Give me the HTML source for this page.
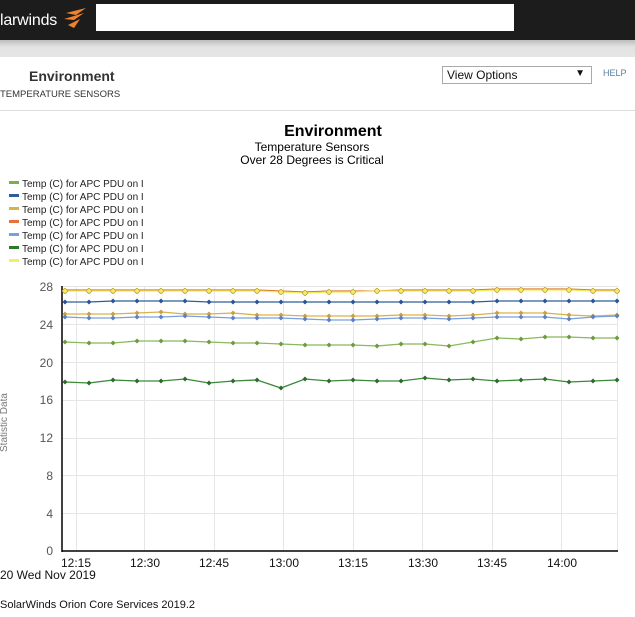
<!DOCTYPE html>
<html><head><meta charset="utf-8"><style>
body{margin:0;width:635px;height:617px;background:#fff;font-family:"Liberation Sans",sans-serif;position:relative;overflow:hidden}
.top{position:absolute;left:0;top:0;width:635px;height:40px;background:#1c1c1c}
.logo{position:absolute;left:0;top:12px;color:#fff;font-size:16px;letter-spacing:-0.2px}
.search{position:absolute;left:96px;top:4px;width:418px;height:27px;background:#fff}
.bar{position:absolute;left:0;top:40px;width:635px;height:17px;background:linear-gradient(#bdbdbd,#e2e2e2 40%,#e6e6e6)}
.t1{position:absolute;left:29px;top:68px;font-size:14px;font-weight:bold;color:#333}
.t2{position:absolute;left:0;top:89px;font-size:9.5px;color:#333}
.sel{position:absolute;left:442px;top:66px;width:150px;height:18px;border:1px solid #aaa;font-size:12px;box-sizing:border-box;padding:1px 4px;color:#111}
.sel span{position:absolute;right:6px;top:1px;font-size:10px}
.help{position:absolute;left:603px;top:68px;font-size:9px;color:#5a7fa0}
.hr{position:absolute;left:0;top:110px;width:635px;height:1px;background:#ddd}
.abs{position:absolute}
</style></head><body>
<div class="top"></div>
<div class="logo">larwinds</div>
<svg class="abs" style="left:60px;top:7px" width="28" height="24" viewBox="0 0 28 24"><path d="M6 6 L26 1 L16 8 Z M4 12 L24 6 L14 13 Z M8 18 L20 12 L14 21 Z" fill="#f0822d"/></svg>
<div class="search"></div>
<div class="bar"></div>
<div class="t1">Environment</div>
<div class="t2">TEMPERATURE SENSORS</div>
<div class="sel">View Options<span>▼</span></div>
<div class="help">HELP</div>
<div class="hr"></div>
<div class="abs" style="left:0;top:123px;width:666px;text-align:center;font-size:16px;font-weight:bold;color:#000">Environment</div>
<div class="abs" style="left:0;top:141px;width:624px;text-align:center;font-size:12px;line-height:13px;color:#000">Temperature Sensors<br>Over 28 Degrees is Critical</div>
<svg class="abs" style="left:0;top:0" width="635" height="617" font-family="Liberation Sans" >
<g font-size="10" fill="#222">
<rect x="9" y="181" width="10" height="3" fill="#7cae4b"/><text x="22" y="187">Temp (C) for APC PDU on I</text>
<rect x="9" y="194" width="10" height="3" fill="#2f5f9a"/><text x="22" y="200">Temp (C) for APC PDU on I</text>
<rect x="9" y="207" width="10" height="3" fill="#d9b24a"/><text x="22" y="213">Temp (C) for APC PDU on I</text>
<rect x="9" y="220" width="10" height="3" fill="#e8703a"/><text x="22" y="226">Temp (C) for APC PDU on I</text>
<rect x="9" y="233" width="10" height="3" fill="#7a9fe0"/><text x="22" y="239">Temp (C) for APC PDU on I</text>
<rect x="9" y="246" width="10" height="3" fill="#2d7a2d"/><text x="22" y="252">Temp (C) for APC PDU on I</text>
<rect x="9" y="259" width="10" height="3" fill="#f5f05a"/><text x="22" y="265">Temp (C) for APC PDU on I</text>
</g>
<g stroke="#e6e6e6" stroke-width="1">
<line x1="62" y1="286.5" x2="617" y2="286.5"/><line x1="62" y1="324.5" x2="617" y2="324.5"/><line x1="62" y1="362.5" x2="617" y2="362.5"/><line x1="62" y1="400.5" x2="617" y2="400.5"/><line x1="62" y1="438.5" x2="617" y2="438.5"/><line x1="62" y1="475.5" x2="617" y2="475.5"/><line x1="62" y1="513.5" x2="617" y2="513.5"/>
<line x1="76.5" y1="286" x2="76.5" y2="551"/><line x1="144.5" y1="286" x2="144.5" y2="551"/><line x1="214.5" y1="286" x2="214.5" y2="551"/><line x1="283.5" y1="286" x2="283.5" y2="551"/><line x1="353.5" y1="286" x2="353.5" y2="551"/><line x1="422.5" y1="286" x2="422.5" y2="551"/><line x1="492.5" y1="286" x2="492.5" y2="551"/><line x1="561.5" y1="286" x2="561.5" y2="551"/><line x1="617.5" y1="286" x2="617.5" y2="551"/>
</g>
<g stroke="#000" stroke-width="1.5"><line x1="62" y1="286" x2="62" y2="552"/><line x1="62" y1="551" x2="618" y2="551"/></g>
<g font-size="12" fill="#555" text-anchor="end">
<text x="53" y="291">28</text><text x="53" y="329">24</text><text x="53" y="367">20</text><text x="53" y="404">16</text><text x="53" y="442">12</text><text x="53" y="480">8</text><text x="53" y="518">4</text><text x="53" y="555">0</text></g>
<text transform="translate(7,452) rotate(-90)" font-size="10" fill="#777">Statistic Data</text>
<g font-size="12" fill="#111" text-anchor="middle">
<text x="76" y="567">12:15</text><text x="145" y="567">12:30</text><text x="214" y="567">12:45</text><text x="284" y="567">13:00</text><text x="353" y="567">13:15</text><text x="423" y="567">13:30</text><text x="492" y="567">13:45</text><text x="562" y="567">14:00</text></g>
<text x="0" y="579" font-size="12" fill="#111">20 Wed Nov 2019</text>
<text x="0" y="608" font-size="11" fill="#111">SolarWinds Orion Core Services 2019.2</text>
<defs>
<marker id="m1" viewBox="0 0 6 6" refX="3" refY="3" markerWidth="5" markerHeight="5" markerUnits="userSpaceOnUse"><path d="M3 0L6 3L3 6L0 3Z" fill="#2d6a2d"/></marker>
<marker id="m2" viewBox="0 0 6 6" refX="3" refY="3" markerWidth="5" markerHeight="5" markerUnits="userSpaceOnUse"><path d="M3 0L6 3L3 6L0 3Z" fill="#6e9a3e"/></marker>
<marker id="m3" viewBox="0 0 6 6" refX="3" refY="3" markerWidth="5" markerHeight="5" markerUnits="userSpaceOnUse"><path d="M3 0L6 3L3 6L0 3Z" fill="#5b7fc8"/></marker>
<marker id="m4" viewBox="0 0 6 6" refX="3" refY="3" markerWidth="5" markerHeight="5" markerUnits="userSpaceOnUse"><path d="M3 0L6 3L3 6L0 3Z" fill="#c8a040"/></marker>
<marker id="m5" viewBox="0 0 6 6" refX="3" refY="3" markerWidth="5" markerHeight="5" markerUnits="userSpaceOnUse"><path d="M3 0L6 3L3 6L0 3Z" fill="#2a5590"/></marker>
<marker id="m6" viewBox="0 0 6 6" refX="3" refY="3" markerWidth="6" markerHeight="6" markerUnits="userSpaceOnUse"><path d="M3 0L6 3L3 6L0 3Z" fill="#f3ec6a" stroke="#c9a030" stroke-width="0.8"/></marker>
</defs>
<g fill="none" stroke-width="1.3">
<polyline stroke="#d97a2a" points="65,290 89,290 113,290 137,290 161,290 185,290 209,290 233,290 257,290 281,291 305,292 329,291 353,291 377,291 401,290 425,290 449,290 473,290 497,289 521,289 545,289 569,289 593,290 617,290"/>
<polyline stroke="#f3ec5a" marker-start="url(#m6)" marker-mid="url(#m6)" marker-end="url(#m6)" points="65,291 89,291 113,291 137,291 161,291 185,291 209,291 233,291 257,291 281,292 305,293 329,292 353,292 377,291 401,291 425,291 449,291 473,291 497,290 521,290 545,290 569,290 593,291 617,291"/>
<polyline stroke="#2f5f9a" marker-start="url(#m5)" marker-mid="url(#m5)" marker-end="url(#m5)" points="65,302 89,302 113,301 137,301 161,301 185,301 209,302 233,302 257,302 281,302 305,302 329,302 353,302 377,302 401,302 425,302 449,302 473,302 497,301 521,301 545,301 569,301 593,301 617,301"/>
<polyline stroke="#d9b24a" marker-start="url(#m4)" marker-mid="url(#m4)" marker-end="url(#m4)" points="65,314 89,314 113,314 137,313 161,312 185,314 209,314 233,313 257,315 281,315 305,316 329,316 353,316 377,316 401,315 425,315 449,316 473,315 497,313 521,313 545,313 569,315 593,316 617,315"/>
<polyline stroke="#7a9fe0" marker-start="url(#m3)" marker-mid="url(#m3)" marker-end="url(#m3)" points="65,317 89,318 113,318 137,317 161,317 185,316 209,317 233,318 257,318 281,318 305,319 329,320 353,320 377,319 401,318 425,318 449,319 473,318 497,317 521,317 545,317 569,319 593,317 617,316"/>
<polyline stroke="#8ab85a" marker-start="url(#m2)" marker-mid="url(#m2)" marker-end="url(#m2)" points="65,342 89,343 113,343 137,341 161,341 185,341 209,342 233,343 257,343 281,344 305,345 329,345 353,345 377,346 401,344 425,344 449,346 473,342 497,338 521,339 545,337 569,337 593,338 617,338"/>
<polyline stroke="#3a8a3a" marker-start="url(#m1)" marker-mid="url(#m1)" marker-end="url(#m1)" points="65,382 89,383 113,380 137,381 161,381 185,379 209,383 233,381 257,380 281,388 305,379 329,381 353,380 377,381 401,381 425,378 449,380 473,379 497,381 521,380 545,379 569,382 593,381 617,380"/>
</g>
</svg>
</body></html>
